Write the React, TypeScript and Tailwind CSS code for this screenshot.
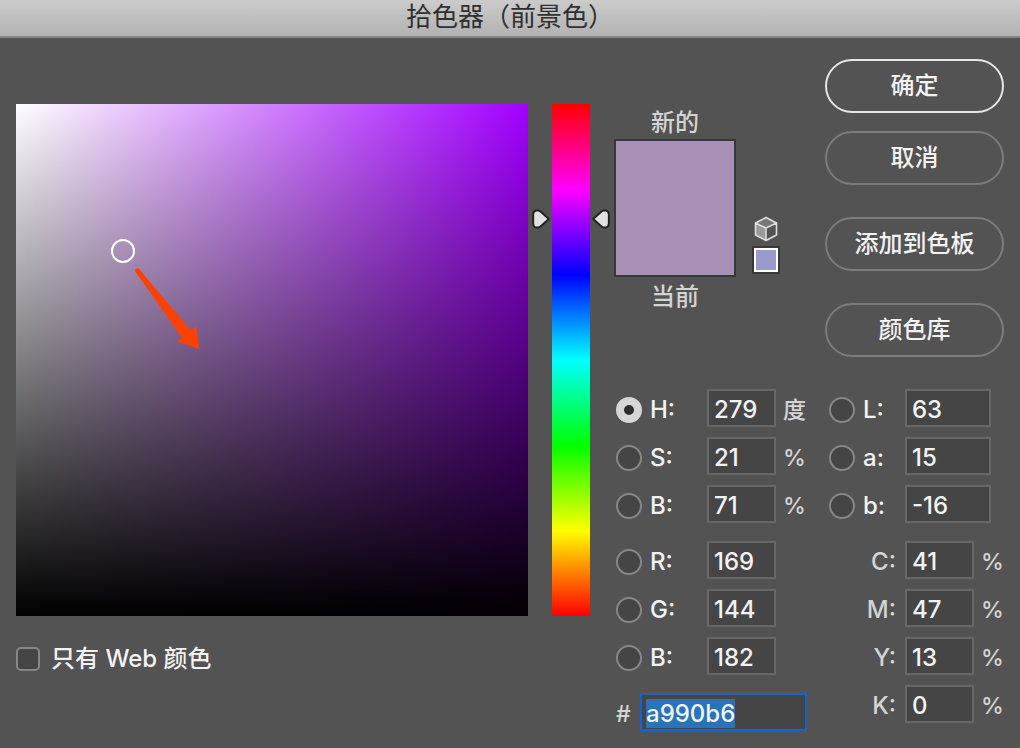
import { useEffect, useRef, type ReactNode } from "react";

const FIELD_INPUT =
  "h-[38px] shrink-0 border-2 border-[#676767] bg-[#454545] pt-[2px] pl-[5px] text-[#f2f2f2] outline-none";

const RADIO =
  "m-0 size-[26px] shrink-0 appearance-none rounded-full border-2 border-[#878787] bg-[#454545] checked:border-8 checked:border-[#d6d6d6] checked:bg-[#2d2d2d]";

type Channel = {
  id: string;
  label: string;
  value: string;
  unit?: string;
};

const HSB: Channel[] = [
  { id: "hue", label: "H:", value: "279", unit: "度" },
  { id: "saturation", label: "S:", value: "21", unit: "%" },
  { id: "brightness", label: "B:", value: "71", unit: "%" },
];

const RGB: Channel[] = [
  { id: "red", label: "R:", value: "169" },
  { id: "green", label: "G:", value: "144" },
  { id: "blue", label: "B:", value: "182" },
];

const LAB: Channel[] = [
  { id: "lab-l", label: "L:", value: "63" },
  { id: "lab-a", label: "a:", value: "15" },
  { id: "lab-b", label: "b:", value: "-16" },
];

const CMYK: Channel[] = [
  { id: "cyan", label: "C:", value: "41", unit: "%" },
  { id: "magenta", label: "M:", value: "47", unit: "%" },
  { id: "yellow", label: "Y:", value: "13", unit: "%" },
  { id: "black", label: "K:", value: "0", unit: "%" },
];

function RadioRow({ channel, wide }: { channel: Channel; wide?: boolean }) {
  return (
    <div className="flex items-center">
      <div className={`flex shrink-0 items-center gap-2 pt-1 ${wide ? "w-[76px]" : "w-[91px]"}`}>
        <input
          type="radio"
          name="channel"
          id={`${channel.id}-radio`}
          aria-label={channel.label}
          defaultChecked={channel.id === "hue"}
          className={RADIO}
        />
        <label htmlFor={channel.id}>{channel.label}</label>
      </div>
      <input
        id={channel.id}
        defaultValue={channel.value}
        className={`${FIELD_INPUT} ${wide ? "w-[86px]" : "w-[69px]"}`}
      />
      {channel.unit && <span className="pt-1 pl-[7px] text-[23px] text-[#d4d4d4]">{channel.unit}</span>}
    </div>
  );
}

function CmykRow({ channel }: { channel: Channel }) {
  return (
    <div className="flex items-center">
      <label htmlFor={channel.id} className="w-[76px] shrink-0 pt-1 pr-[9px] text-right text-[#d4d4d4]">
        {channel.label}
      </label>
      <input id={channel.id} defaultValue={channel.value} className={`${FIELD_INPUT} w-[69px]`} />
      <span className="pt-1 pl-[7px] text-[23px] text-[#d4d4d4]">{channel.unit}</span>
    </div>
  );
}

function PillButton({ children, primary }: { children: ReactNode; primary?: boolean }) {
  return (
    <button
      type="button"
      className={`h-[54px] w-full rounded-full border-2 text-2xl font-medium text-[#f2f2f2] ${
        primary ? "border-[#e6e6e6]" : "border-[#7c7c7c]"
      }`}
    >
      {children}
    </button>
  );
}

function HueMarker({ className }: { className: string }) {
  return (
    <svg viewBox="0 0 18 20" className={`absolute top-[22.4%] h-5 w-[18px] -translate-y-1/2 ${className}`}>
      <path
        d="M4 1.500H6Q7.500 1.500 8.800 2.800L16.800 10L8.800 17.200Q7.500 18.500 6 18.500H4Q1.200 17.800 1.200 14.500V5.500Q1.200 2.200 4 1.500Z"
        fill="#e2e2e2"
        stroke="#202020"
        strokeWidth="1.900"
        strokeLinejoin="round"
      />
    </svg>
  );
}

function ColorField() {
  return (
    <div className="relative aspect-square min-w-0 flex-1 bg-[linear-gradient(to_top,#000,transparent),linear-gradient(to_right,#fff,#a200ff)]">
      <span className="absolute top-[28.7%] left-[20.9%] size-6 -translate-x-1/2 -translate-y-1/2 rounded-full border-2 border-white" />
      <svg viewBox="0 0 512 512" className="absolute inset-0 size-full">
        <path
          d="M119.300 167.500Q118.500 164.500 121.300 164.300Q123.300 164.300 124.800 167Q148 195 175.800 227L180.200 221.500L183.300 245L159.800 237L166.500 234.500Q144 202 119.300 167.500Z"
          fill="#ff4100"
        />
      </svg>
    </div>
  );
}

function HueBar() {
  return (
    <div className="relative w-[38px] shrink-0 bg-[linear-gradient(to_bottom,#f00,#f0f,#00f,#0ff,#0f0,#ff0,#f00)]">
      <HueMarker className="right-full mr-[2px]" />
      <HueMarker className="left-full ml-[2px] -scale-x-100" />
    </div>
  );
}

function CubeIcon() {
  return (
    <svg viewBox="0 0 24 26" className="h-[26px] w-6">
      <path d="M12 1.500L22.500 7L12 12L1.500 7Z" fill="#777" />
      <path d="M1.500 7L12 12V24.500L1.500 19Z" fill="#9a9a9a" />
      <path
        d="M12 1.500L22.500 7V19L12 24.500L1.500 19V7ZM1.500 7L12 12L22.500 7M12 12V24.500"
        fill="none"
        stroke="#dedede"
        strokeWidth="1.600"
        strokeLinejoin="round"
      />
    </svg>
  );
}

export default function App() {
  const hexRef = useRef<HTMLInputElement>(null);

  useEffect(() => {
    hexRef.current?.focus();
    hexRef.current?.select();
  }, []);

  return (
    <div className="min-h-screen bg-[#535353] font-['Inter','Noto_Sans_CJK_SC',sans-serif] text-2xl leading-8 font-medium text-[#f2f2f2]">
      <header className="h-[38px] border-b-2 border-[#858585] bg-linear-to-b from-[#cbcbcb] to-[#b2b2b2]">
        <h1 className="text-center text-[26px] leading-[34px] font-normal text-[#303030]">拾色器（前景色）</h1>
      </header>

      <main className="flex items-start gap-6 px-4">
        <section className="min-w-0 flex-1 pt-[66px]">
          <div className="flex gap-6">
            <ColorField />
            <HueBar />
          </div>
          <label className="mt-[27px] flex items-center gap-[11px] leading-8">
            <input
              type="checkbox"
              className="m-0 size-6 appearance-none rounded-[5px] border-2 border-[#878787] bg-[#454545]"
            />
            只有 Web 颜色
          </label>
        </section>

        <section className="w-[390px] shrink-0 pt-[21px]">
          <div className="flex items-start">
            <div className="w-[122px] pt-12 text-center text-[#d4d4d4]">
              <p className="leading-8">新的</p>
              <div className="h-[138px] border-2 border-[#383838] bg-[#a990b6]" />
              <p className="leading-10">当前</p>
            </div>
            <div className="ml-4 flex flex-col items-center gap-1 pt-[157px]">
              <CubeIcon />
              <div className="size-7 border-2 border-[#383838] bg-white p-[2px]">
                <div className="size-full bg-[#9999cc]" />
              </div>
            </div>
            <div className="ml-auto flex w-[179px] flex-col gap-8">
              <div className="flex flex-col gap-[18px]">
                <PillButton primary>确定</PillButton>
                <PillButton>取消</PillButton>
              </div>
              <PillButton>添加到色板</PillButton>
              <PillButton>颜色库</PillButton>
            </div>
          </div>

          <div className="mt-8 flex justify-between pl-[2px]">
            <div className="flex flex-col gap-[18px]">
              <div className="flex flex-col gap-[10px]">
                {HSB.map((c) => (
                  <RadioRow key={c.id} channel={c} />
                ))}
              </div>
              <div className="flex flex-col gap-[10px]">
                {RGB.map((c) => (
                  <RadioRow key={c.id} channel={c} />
                ))}
              </div>
              <div className="flex items-center">
                <label htmlFor="hex" className="w-6 pt-1 text-[23px] text-[#d4d4d4]">
                  #
                </label>
                <input
                  id="hex"
                  ref={hexRef}
                  defaultValue="a990b6"
                  className="h-[38px] w-[167px] border-2 border-[#1463cf] bg-[#454545] pt-[2px] pl-1 text-[#f2f2f2] outline-none selection:bg-[#2874b8] selection:text-[#f2f2f2]"
                />
              </div>
            </div>

            <div className="flex w-[175px] flex-col gap-[18px]">
              <div className="flex flex-col gap-[10px]">
                {LAB.map((c) => (
                  <RadioRow key={c.id} channel={c} wide />
                ))}
              </div>
              <div className="flex flex-col gap-[10px]">
                {CMYK.map((c) => (
                  <CmykRow key={c.id} channel={c} />
                ))}
              </div>
            </div>
          </div>
        </section>
      </main>
    </div>
  );
}
